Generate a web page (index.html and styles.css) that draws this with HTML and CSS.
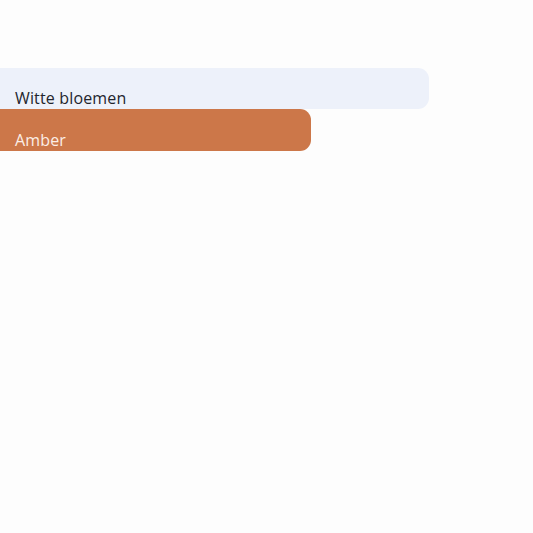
FILE: index.html
```html
<!DOCTYPE html>
<html>
<head>
<meta charset="utf-8">
<link rel="stylesheet" href="styles.css">
</head>
<body>
<div class="list">
  <div class="bar bar-light"><span class="label">Witte bloemen</span></div>
  <div class="bar bar-amber"><span class="label">Amber</span></div>
</div>
</body>
</html>
```
FILE: styles.css
```css
html, body {
  margin: 0;
  padding: 0;
  background: #fdfdfd;
  font-family: "Open Sans", "Noto Sans", sans-serif;
}
.list {
  padding-top: 68px;
  display: flex;
  flex-direction: column;
  align-items: flex-start;
}
.bar {
  box-sizing: border-box;
  display: flex;
  align-items: flex-end;
  padding: 0 15px 1px;
  font-size: 16px;
  line-height: 20px;
  letter-spacing: 0.15px;
  border-radius: 0 11px 11px 0;
}
.bar-light {
  width: 429px;
  height: 41px;
  background: #edf1fa;
  color: #23252d;
}
.bar-amber {
  width: 311px;
  height: 42px;
  background: #cc7749;
  color: #fbeee6;
}
```
